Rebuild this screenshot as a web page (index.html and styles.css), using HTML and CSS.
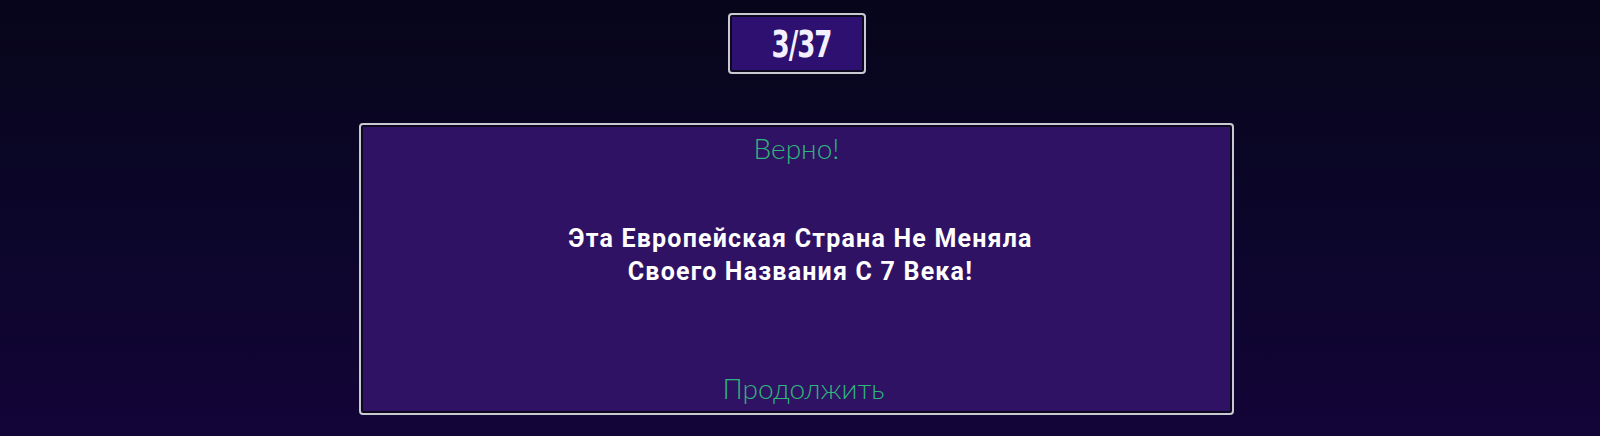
FILE: index.html
```html
<!DOCTYPE html>
<html lang="ru">
<head>
<meta charset="utf-8">
<title>Quiz</title>
<link rel="stylesheet" href="styles.css">
</head>
<body>
<main class="page">
  <div class="counter"><span class="counter-text">3/37</span></div>
  <section class="card">
    <div class="result">Верно!</div>
    <p class="fact">Эта Европейская Страна Не Меняла<br>Своего Названия С 7 Века!</p>
    <div class="continue">Продолжить</div>
  </section>
</main>
</body>
</html>
```
FILE: styles.css
```css
html, body {
  margin: 0;
  padding: 0;
  height: 100%;
}
body {
  background: linear-gradient(180deg, #07051a 0%, #0b0628 45%, #130538 100%);
  font-family: Roboto, "Noto Sans", sans-serif;
  overflow: hidden;
}
.page {
  display: flex;
  flex-direction: column;
  align-items: center;
  padding-top: 13px;
  padding-right: 7px;
}
.counter {
  width: 138px;
  height: 61px;
  box-sizing: border-box;
  border: 2px solid #c9c9d2;
  border-radius: 4px;
  box-shadow: inset 0 0 0 2px #0c0820;
  background: #2d1070;
  display: flex;
  align-items: center;
  justify-content: center;
  padding-left: 10px;
}
.counter-text {
  font-family: "DejaVu Sans Condensed", "DejaVu Sans", sans-serif;
  font-weight: bold;
  font-size: 29px;
  color: #f4f0ff;
  letter-spacing: -1px;
  transform: scaleY(1.3);
  display: inline-block;
}
.card {
  margin-top: 49px;
  width: 875px;
  height: 292px;
  box-sizing: border-box;
  border: 2px solid #c9c9d2;
  border-radius: 4px;
  box-shadow: inset 0 0 0 2px #0c0820;
  background: #2f1264;
  display: flex;
  flex-direction: column;
  align-items: center;
  justify-content: space-between;
  padding: 6px 0 8px;
}
.result, .continue {
  font-family: Lato, "Open Sans", sans-serif;
  font-weight: 300;
  color: #30b57c;
}
.result {
  font-size: 28px;
  line-height: 34px;
}
.fact {
  margin: 0 0 26px;
  padding-left: 8px;
  font-weight: bold;
  font-size: 25px;
  letter-spacing: 1.2px;
  line-height: 33px;
  color: #ffffff;
  text-align: center;
}
.continue {
  font-size: 28px;
  line-height: 34px;
  padding-left: 14px;
}
```
